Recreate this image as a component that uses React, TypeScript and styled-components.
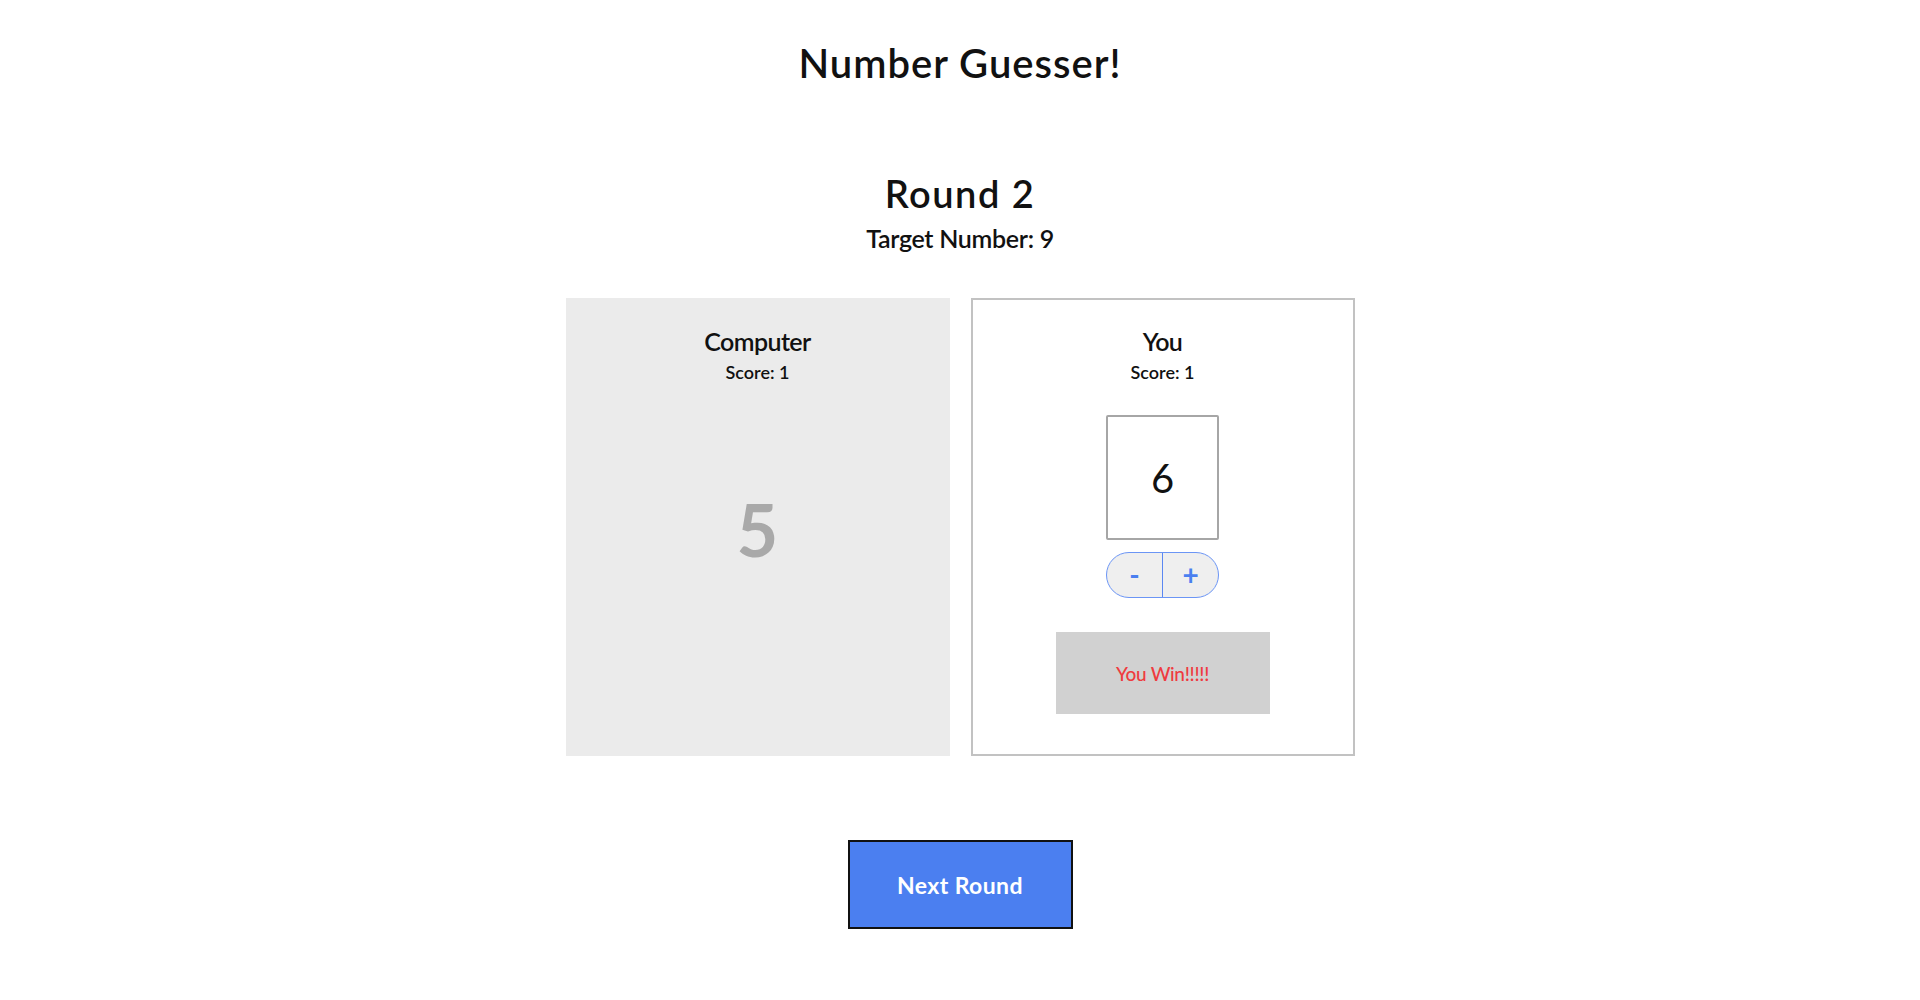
import React from "react";
import styled, { createGlobalStyle } from "styled-components";

const Global = createGlobalStyle`
  html, body { margin: 0; padding: 0; background: #ffffff; }
  body { font-family: "Lato", "Noto Sans", sans-serif; color: #111; }
`;

const Page = styled.main`
  display: flex;
  flex-direction: column;
  align-items: center;
  padding-top: 43px;
`;

const Title = styled.h1`
  margin: 0;
  font-size: 40px;
  line-height: 1;
  font-weight: 600;
  letter-spacing: 1px;
`;

const RoundTitle = styled.h2`
  margin: 91px 0 0;
  font-size: 38px;
  line-height: 1;
  font-weight: 600;
  letter-spacing: 1.5px;
`;

const Target = styled.div`
  margin-top: 14px;
  font-size: 25px;
  line-height: 1;
  font-weight: 600;
  letter-spacing: -0.3px;
`;

const Cards = styled.section`
  margin-top: 47px;
  display: flex;
  gap: 21px;
`;

const Card = styled.div<{ $variant: "computer" | "player" }>`
  box-sizing: border-box;
  width: 384px;
  height: 458px;
  display: flex;
  flex-direction: column;
  align-items: center;
  padding-top: 29px;
  background: ${(p) => (p.$variant === "computer" ? "#ebebeb" : "#ffffff")};
  border: 2px solid ${(p) => (p.$variant === "computer" ? "#ebebeb" : "#c2c2c2")};
`;

const CardName = styled.h3`
  margin: 0;
  font-size: 25px;
  line-height: 1;
  font-weight: 600;
  letter-spacing: -0.6px;
`;

const Score = styled.div`
  margin-top: 9px;
  font-size: 18px;
  line-height: 1;
  font-weight: 600;
`;

const ComputerGuess = styled.div`
  margin-top: 112px;
  font-size: 72px;
  line-height: 1;
  font-weight: 700;
  color: #a9a9a9;
`;

const GuessBox = styled.div`
  box-sizing: border-box;
  margin-top: 34px;
  width: 113px;
  height: 125px;
  border: 2px solid #a6a6a6;
  border-radius: 2px;
  display: flex;
  align-items: center;
  justify-content: center;
  font-size: 40px;
  font-weight: 400;
  color: #111;
`;

const Stepper = styled.div`
  box-sizing: border-box;
  margin-top: 12px;
  width: 113px;
  height: 46px;
  display: flex;
  border: 1.5px solid #6b95f5;
  border-radius: 23px;
  overflow: hidden;
  background: #efefef;
`;

const StepButton = styled.button<{ $first?: boolean }>`
  flex: 1;
  border: none;
  border-left: ${(p) => (p.$first ? "none" : "1.5px solid #5a87f2")};
  background: transparent;
  color: #4a7ff0;
  font-family: "Lato", sans-serif;
  font-size: 28px;
  font-weight: 700;
  line-height: 1;
  padding: 0 0 2px;
  cursor: pointer;
`;

const Result = styled.div`
  margin-top: 34px;
  width: 214px;
  height: 82px;
  background: #d1d1d1;
  display: flex;
  align-items: center;
  justify-content: center;
  color: #ef3b3f;
  font-size: 19px;
  font-weight: 500;
  letter-spacing: -0.3px;
`;

const NextButton = styled.button`
  box-sizing: border-box;
  margin-top: 84px;
  width: 225px;
  height: 89px;
  background: #4b7ff0;
  border: 2px solid #111;
  color: #ffffff;
  font-family: "Lato", sans-serif;
  font-size: 23px;
  font-weight: 700;
  letter-spacing: 0.4px;
  cursor: pointer;
`;

export default function App() {
  return (
    <>
      <Global />
      <Page>
        <Title>Number Guesser!</Title>
        <RoundTitle>Round 2</RoundTitle>
        <Target>Target Number: 9</Target>
        <Cards>
          <Card $variant="computer">
            <CardName>Computer</CardName>
            <Score>Score: 1</Score>
            <ComputerGuess>5</ComputerGuess>
          </Card>
          <Card $variant="player">
            <CardName>You</CardName>
            <Score>Score: 1</Score>
            <GuessBox>6</GuessBox>
            <Stepper>
              <StepButton $first>-</StepButton>
              <StepButton>+</StepButton>
            </Stepper>
            <Result>You Win!!!!!</Result>
          </Card>
        </Cards>
        <NextButton>Next Round</NextButton>
      </Page>
    </>
  );
}
